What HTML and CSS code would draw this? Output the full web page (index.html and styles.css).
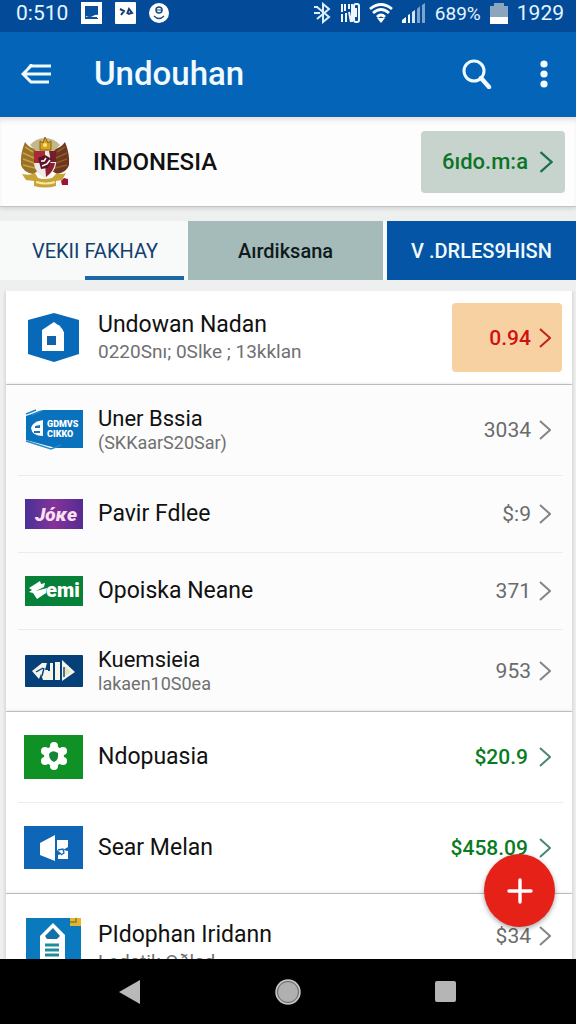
FILE: index.html
```html
<!DOCTYPE html>
<html lang="id">
<head>
  <meta charset="UTF-8" />
  <meta name="viewport" content="width=device-width, initial-scale=1" />
  <title>Undouhan</title>
  <link rel="stylesheet" href="styles.css">
</head>
<body>

<svg class="symbols" width="0" height="0" aria-hidden="true">
  <symbol id="chevron" viewBox="0 0 12 20">
    <path d="M1 1 L11 10 L1 19" fill="none" stroke="currentColor" stroke-width="2" />
  </symbol>
</svg>

<div class="screen">
  <div class="status-bar">
    <span class="status-time">0:510</span>
    <svg width="21" height="22" viewBox="0 0 21 22">
      <path fill="#fff" d="M0 0h21v22H0z" />
      <path fill="#0b509c" d="M4 4h13v13H4z" />
      <path fill="#fff" d="M5 14q4 2 7 0q3-2 5-1v3H5z" />
      <path fill="#0b509c" d="M5 15h11v2H5z" />
    </svg>
    <svg width="21" height="22" viewBox="0 0 21 22">
      <rect width="21" height="22" rx="1" fill="#fff" />
      <path d="M5 7l4 2-3 4M12 12l2-5 3 4-4 1" fill="none" stroke="#123d70" stroke-width="2" />
    </svg>
    <svg width="20" height="20" viewBox="0 0 20 20">
      <circle cx="10" cy="10" r="10" fill="#fff" />
      <circle cx="10" cy="7" r="3" fill="none" stroke="#174b82" stroke-width="1.5" />
      <path d="M7 7h6M5 13q5 5 10 0" fill="none" stroke="#174b82" stroke-width="1.2" />
    </svg>
    <div class="status-right">
      <svg width="17" height="22" viewBox="0 0 17 22">
        <path d="M3 5L15 15L9 20V2L15 7L3 17M0 5h4M0 11h6" fill="none" stroke="#dceefb" stroke-width="2" />
      </svg>
      <svg width="20" height="20" viewBox="0 0 20 20">
        <path d="M2 1v8M5 1v7M2 11v8M6 10v9M9 1v5M9 9l2 10M12 1v18" fill="none" stroke="#f0f7fc" stroke-width="2" />
        <rect x="14" y="1" width="5" height="18" rx="2" fill="none" stroke="#f0f7fc" stroke-width="2" />
        <path d="M16 5v9" stroke="#f0f7fc" stroke-width="2" />
      </svg>
      <svg width="24" height="20" viewBox="0 0 24 20">
        <path d="M1 6Q12-3 23 6M4 10q8-7 16 0M8 14q4-4 8 0" fill="none" stroke="#fff" stroke-width="2.8" />
        <path d="M8 15h8l-4 5z" fill="#fff" />
      </svg>
      <svg width="24" height="20" viewBox="0 0 24 20">
        <path d="M0 20v-3l4-3v6zM6 20v-8l2-1v9z" fill="#fff" />
        <path d="M10 20V9l3-2v13z" fill="#d6e4f0" />
        <path d="M15 20V6l3-3v17zM20 20V2l3-2v20z" fill="#7ba3cc" />
      </svg>
      <span class="status-battery">689%</span>
      <svg width="18" height="21" viewBox="0 0 18 21">
        <path d="M0 3h4V0h10v3h4v12H0z" fill="#8ba5bf" />
        <path d="M0 14h18v7H0z" fill="#fff" />
      </svg>
      <span class="status-clock">1929</span>
    </div>
  </div>

  <header class="app-bar">
    <button class="icon-btn" aria-label="Kembali">
      <svg width="30" height="20" viewBox="0 0 30 20">
        <path d="M30 2H10L2 10L10 18H28M4 10h26M11 0L7 5" fill="none" stroke="#eefaff" stroke-width="3" />
      </svg>
    </button>
    <h1>Undouhan</h1>
    <button class="icon-btn" aria-label="Cari">
      <svg width="30" height="30" viewBox="0 0 30 30">
        <circle cx="12" cy="12" r="10" fill="none" stroke="#f1fbff" stroke-width="3" />
        <path d="M19 19l8 9" stroke="#f1fbff" stroke-width="4.4" stroke-linecap="round" />
      </svg>
    </button>
    <button class="icon-btn" aria-label="Menu">
      <svg width="8" height="28" viewBox="0 0 8 28">
        <g fill="#f1fbff">
          <circle cx="4" cy="4" r="3.6" />
          <circle cx="4" cy="14" r="3.6" />
          <circle cx="4" cy="24" r="3.6" />
        </g>
      </svg>
    </button>
  </header>

  <section class="account">
    <svg width="50" height="52" viewBox="0 0 50 52">
      <path d="M5 6Q0 18 1 29q2 7 12 9l5-3-2-22Q9 12 5 6z" fill="#98712a" />
      <path d="M45 6q5 12 4 23-2 7-12 9l-5-3 2-22q7-1 11-7z" fill="#6d3520" />
      <path d="M5 11l8 5M3 17l11 5M3 23l11 4M3 29l12 3" stroke="#c9a33f" stroke-width="1.6" />
      <path d="M45 11l-8 5M47 17l-11 5M47 23l-11 4M47 29l-12 3" stroke="#8f5b26" stroke-width="1.6" />
      <path d="M10 9Q16 2 25 2t15 7l-7 7H17z" fill="#c3b78b" />
      <path d="M20 14V5l3 2 2-6 3 6 3-2v9z" fill="#d9a51e" stroke="#8a6210" />
      <circle cx="25" cy="9" r="2" fill="#fbe27c" />
      <path d="M14 15h22v13q-1 9-11 14-10-5-11-14z" fill="#eee8e6" />
      <path d="M14 15h11v12H14z" fill="#a92a34" />
      <path d="M29 15h7v11h-5z" fill="#741d2c" />
      <path d="M25 27h10q-1 8-9 14z" fill="#8c1f2f" />
      <path d="M18 22l7-3 7 4-4 9-7 1z" fill="#5d1228" />
      <path d="M21 25h3l2-3M22 30l5-2 3-4" stroke="#fff" stroke-width="1.5" fill="none" />
      <path d="M2 38q8 2 13-1l3 5q6 2 14 0l5-5q5 2 9 0l-4 7-6 1v5q-11 3-22 0v-5l-8-1z" fill="#c8a437" />
      <path d="M16 46q10 3 19 0" stroke="#f4e8a7" stroke-width="2" fill="none" />
      <path d="M41 45l3-3 4 1v6h-6z" fill="#9c1634" />
    </svg>
    <h2>INDONESIA</h2>
    <button class="account-btn">
      <span>6ıdo.m:a</span>
      <svg class="chevron" width="14" height="22"><use href="#chevron" /></svg>
    </button>
  </section>

  <nav class="tabs">
    <button class="tab tab-current">VEKII FAKHAY</button>
    <button class="tab tab-gray">Aırdiksana</button>
    <button class="tab tab-blue">V .DRLES9HISN</button>
  </nav>

  <main class="list">
    <ul class="group">
      <li>
        <a class="row row-highlight" href="#">
          <svg class="thumb" width="60" height="50" viewBox="0 0 60 50">
            <path d="M30 0L55 7V41L30 49L4 41V7z" fill="#0869b9" />
            <path d="M18 38V17L30 9l4 3h1l4 5v1l1 1v19z" fill="#fff" />
            <path d="M23 23h9v9h-9z" fill="#1163a8" />
          </svg>
          <span class="text">
            <span class="name">Undowan Nadan</span>
            <span class="detail">0220Snı; 0Slke ; 13kklan</span>
          </span>
          <span class="value badge">0.94 <svg class="chevron" width="12" height="20"><use href="#chevron" /></svg></span>
        </a>
      </li>
    </ul>

    <ul class="group group-soft">
      <li>
        <a class="row row-tall" href="#">
          <svg class="thumb" width="60" height="42" viewBox="0 0 60 42">
            <path d="M2 7L19 1H59V39H33L24 37 2 31z" fill="#0872bc" />
            <path d="M2 5l10-4M8 6l9-4M2 32l25 8 10-4" stroke="#2489c9" stroke-width="1.5" fill="none" />
            <path d="M7 19q1-6 12-8v16q-11 0-12-8z" fill="#fff" />
            <path d="M11 17l5-1v3h-5zM10 22h6v2h-6z" fill="#1674ba" />
            <text class="logo-text logo-small" x="23" y="18">GDMVS</text>
            <text class="logo-text logo-small" x="23" y="28">CIKKO</text>
          </svg>
          <span class="text text-narrow">
            <span class="name">Uner Bssia</span>
            <span class="detail">(SKKaarS20Sar)</span>
          </span>
          <span class="value">3034 <svg class="chevron" width="12" height="20"><use href="#chevron" /></svg></span>
        </a>
      </li>
      <li>
        <a class="row" href="#">
          <svg class="thumb" width="60" height="32" viewBox="0 0 60 32">
            <defs>
              <linearGradient id="purple"><stop offset="0" stop-color="#493197" /><stop offset=".5" stop-color="#84339a" /><stop offset="1" stop-color="#562b91" /></linearGradient>
            </defs>
            <path d="M1 1h58v30H1z" fill="url(#purple)" />
            <text class="logo-text logo-italic" x="11" y="23">Jóĸe</text>
          </svg>
          <span class="text"><span class="name">Pavir Fdlee</span></span>
          <span class="value">$:9 <svg class="chevron" width="12" height="20"><use href="#chevron" /></svg></span>
        </a>
      </li>
      <li>
        <a class="row" href="#">
          <svg class="thumb" width="60" height="32" viewBox="0 0 60 32">
            <path d="M1 1h58v30H1z" fill="#078039" />
            <path d="M5 13L16 6l1 3 4-1-1 4-8 4 11-3-1 5-9 6-4-6-4-1 3-2z" fill="#fff" />
            <text class="logo-text" x="22" y="22">emi</text>
          </svg>
          <span class="text"><span class="name">Opoiska Neane</span></span>
          <span class="value">371 <svg class="chevron" width="12" height="20"><use href="#chevron" /></svg></span>
        </a>
      </li>
      <li>
        <a class="row row-mid" href="#">
          <svg class="thumb" width="60" height="34" viewBox="0 0 60 34">
            <rect x="1" y="1" width="58" height="32" rx="1" fill="#064078" />
            <path d="M8 17l10-8h5l-2 7h3v10h-5l-2-6-2 5zM26 9h3v17h-6v-9h3zM31 8h5v18h-5zM38 6l13 12-13 9z" fill="#f5f5ec" />
            <path d="M12 18l7-4M20 14l-2 8" stroke="#064078" stroke-width="1.4" fill="none" />
            <path d="M41 12l6 6-6 4z" fill="#e9e3b8" />
            <path d="M40 13v10" stroke="#064078" stroke-width="1.4" />
          </svg>
          <span class="text text-narrow">
            <span class="name">Kuemsieia</span>
            <span class="detail">lakaen10S0ea</span>
          </span>
          <span class="value">953 <svg class="chevron" width="12" height="20"><use href="#chevron" /></svg></span>
        </a>
      </li>
    </ul>

    <ul class="group">
      <li>
        <a class="row row-tall" href="#">
          <svg class="thumb" width="60" height="44" viewBox="0 0 60 44">
            <path d="M0 0h59v44H0z" fill="#109126" />
            <g fill="#fff">
              <circle cx="30" cy="21" r="10" />
              <circle cx="30" cy="11" r="4" /><circle cx="39" cy="16" r="4" /><circle cx="39" cy="26" r="4" />
              <circle cx="30" cy="31" r="4" /><circle cx="21" cy="26" r="4" /><circle cx="21" cy="16" r="4" />
            </g>
            <path d="M25 19q3-5 9-1 1 7-4 9-5-2-5-8z" fill="#16853a" />
          </svg>
          <span class="text"><span class="name">Ndopuasia</span></span>
          <span class="value value-green">$20.9 <svg class="chevron" width="12" height="20"><use href="#chevron" /></svg></span>
        </a>
      </li>
      <li>
        <a class="row row-tall" href="#">
          <svg class="thumb" width="60" height="44" viewBox="0 0 60 44">
            <path d="M0 0h59v43H0z" fill="#0f66b6" />
            <path d="M16 17L31 9v26L16 29zM33 14h11v7l-5 3 5 1v8H34v-4l4-1-5-4z" fill="#fff" />
            <path d="M34 24l5-1 1 4-3 2" stroke="#0f66b6" stroke-width="1.3" fill="none" />
          </svg>
          <span class="text"><span class="name">Sear Melan</span></span>
          <span class="value value-green">$458.09 <svg class="chevron" width="12" height="20"><use href="#chevron" /></svg></span>
        </a>
      </li>
    </ul>

    <ul class="group">
      <li>
        <a class="row row-last" href="#">
          <svg class="thumb" width="60" height="60" viewBox="0 0 60 60">
            <path d="M2 0h55v60H2z" fill="#0b79bd" />
            <path d="M46 0h11v8H46z" fill="#e3b62b" />
            <path d="M46 4h6V0" stroke="#9a8a32" stroke-width="2" fill="none" />
            <path d="M16 60V18L29 5l12 12v43z" fill="#fff" />
            <path d="M21 18l8-8 7 8-3 3H23z" fill="#166fa8" />
            <path d="M21 27h14M21 32h14M21 37h14M21 43h14" stroke="#228b9c" stroke-width="3" />
          </svg>
          <span class="text">
            <span class="name">PIdophan Iridann</span>
            <span class="detail">Lodatik Oðlad</span>
          </span>
          <span class="value">$34 <svg class="chevron" width="12" height="20"><use href="#chevron" /></svg></span>
        </a>
      </li>
    </ul>
    <button class="fab" aria-label="Tambah">
      <svg width="26" height="26" viewBox="0 0 26 26">
        <path d="M13 2v22M2 13h22" stroke="#fff" stroke-width="3.4" stroke-linecap="round" />
      </svg>
    </button>
  </main>

  <footer class="nav-bar">
    <button class="icon-btn" aria-label="Kembali">
      <svg width="22" height="24" viewBox="0 0 22 24"><path d="M0 12L21 0v24z" fill="#b8b8b8" /></svg>
    </button>
    <button class="icon-btn" aria-label="Beranda">
      <svg width="26" height="26" viewBox="0 0 26 26">
        <circle cx="13" cy="13" r="12" fill="#b0b0b0" stroke="#c4c4c4" stroke-width="1.5" />
        <circle cx="13" cy="13" r="10.5" fill="none" stroke="#686868" />
      </svg>
    </button>
    <button class="icon-btn" aria-label="Terkini">
      <svg width="22" height="22" viewBox="0 0 22 22"><rect width="21" height="21" rx="2" fill="#b5b5b5" /></svg>
    </button>
  </footer>
</div>

</body>
</html>
```

FILE: styles.css
```css
* {
  margin: 0;
  padding: 0;
  box-sizing: border-box;
}
body {
  font-family: Roboto, "Liberation Sans", sans-serif;
  background: #eef0f0;
  color: #111;
}
button {
  font-family: inherit;
  border: none;
  background: none;
  cursor: pointer;
}
svg {
  display: block;
  flex: none;
}
.symbols {
  position: absolute;
}

.screen {
  display: flex;
  flex-direction: column;
  height: 100vh;
}

.status-bar {
  display: flex;
  align-items: center;
  gap: 13px;
  height: 32px;
  padding: 0 12px 6px 16px;
  background: #034b98;
  color: #e6f5ff;
  font-size: 21px;
}
.status-right {
  display: flex;
  align-items: center;
  gap: 9px;
  margin-left: auto;
}
.status-battery {
  font-size: 19px;
}

.app-bar {
  display: flex;
  align-items: center;
  height: 85px;
  padding: 0 28px 2px 21px;
  background: #0465b8;
}
.app-bar h1 {
  flex: 1;
  margin-left: 43px;
  font-size: 33px;
  font-weight: 500;
  color: #f1fbff;
}
.app-bar .icon-btn + .icon-btn {
  margin-left: 48px;
}

.account {
  display: flex;
  align-items: center;
  height: 90px;
  padding: 0 11px 0 20px;
  background: #fdfdfd;
  border-bottom: 1px solid #c2c4c8;
  box-shadow: 0 2px 4px rgba(60, 60, 90, 0.15), inset 0 5px 5px -2px rgba(60, 60, 90, 0.15);
}
.account h2 {
  flex: 1;
  margin-left: 23px;
  font-size: 24px;
  font-weight: 500;
}
.account-btn {
  display: flex;
  align-items: center;
  justify-content: flex-end;
  gap: 11px;
  width: 144px;
  height: 62px;
  padding-right: 12px;
  border-radius: 4px;
  background: #c7d4ce;
  color: #0c7426;
  font-size: 22px;
  font-weight: 500;
}
.account-btn .chevron {
  color: #19704b;
}

.tabs {
  display: grid;
  grid-template-columns: 184fr 195fr 189fr;
  gap: 4px;
  margin-top: 14px;
  background: #f8f9f9;
}
.tab {
  height: 59px;
  font-size: 20px;
  white-space: nowrap;
}
.tab-current {
  padding-left: 6px;
  color: #12406d;
  background: linear-gradient(#1c68a6, #1c68a6) right bottom / 54% 4px no-repeat;
}
.tab-gray {
  background: #a5bbb9;
  color: #101a1c;
  font-weight: 500;
}
.tab-blue {
  background: #0455a5;
  color: #f1faff;
  font-weight: 500;
}

.list {
  position: relative;
  flex: 1;
  min-height: 0;
  margin-top: 11px;
  padding: 0 4px 0 6px;
  overflow: hidden;
}
.group {
  list-style: none;
  background: #fff;
  border-bottom: 1px solid #cbcdce;
  box-shadow: 0 0 4px rgba(0, 0, 0, 0.2);
}
.group-soft {
  background: #fcfcfc;
}
.group li + li {
  margin: 0 9px 0 12px;
  border-top: 1px solid #ececec;
}
.group li + li .row {
  padding: 0 12px 0 6px;
}
.row {
  display: flex;
  align-items: center;
  gap: 14px;
  height: 76px;
  padding: 0 21px 0 18px;
  color: inherit;
  text-decoration: none;
}
.row-highlight {
  height: 93px;
  padding-right: 10px;
}
.row-tall {
  height: 90px;
}
.row-mid {
  height: 81px;
}
.row-last {
  height: 108px;
}
.row-last .value {
  margin-bottom: 24px;
}
.text {
  display: flex;
  flex: 1;
  flex-direction: column;
  white-space: nowrap;
}
.name {
  font-size: 23px;
  line-height: 28px;
}
.detail {
  font-size: 19px;
  line-height: 26px;
  color: #707070;
}
.text-narrow .name {
  font-size: 22px;
  line-height: 26px;
}
.text-narrow .detail {
  font-size: 18px;
  line-height: 22px;
}
.value {
  display: flex;
  align-items: center;
  gap: 8px;
  font-size: 21px;
  color: #6b6b6b;
}
.value .chevron {
  color: #858585;
}
.value-green {
  gap: 11px;
  color: #087c22;
  font-weight: 500;
}
.value-green .chevron {
  color: #4c8678;
}
.badge {
  justify-content: flex-end;
  width: 110px;
  height: 69px;
  padding-right: 11px;
  border-radius: 4px;
  background: #f8d1a3;
  color: #d01010;
  font-weight: 500;
}
.badge .chevron {
  color: #c22318;
}

.logo-text {
  font-size: 20px;
  font-weight: 900;
  fill: #fff;
}
.logo-small {
  font-size: 9px;
}
.logo-italic {
  font-size: 19px;
  font-style: italic;
  fill: #fbe0f0;
}

.fab {
  position: absolute;
  right: 21px;
  bottom: 32px;
  display: flex;
  align-items: center;
  justify-content: center;
  width: 71px;
  height: 73px;
  border-radius: 50%;
  background: #e52118;
  box-shadow: 0 2px 5px rgba(0, 0, 0, 0.35);
}

.nav-bar {
  display: flex;
  align-items: center;
  justify-content: space-between;
  height: 65px;
  padding: 0 119px;
  background: #000;
}
```
